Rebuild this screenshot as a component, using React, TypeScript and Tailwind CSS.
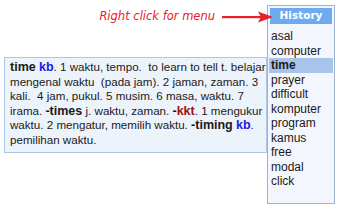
import React from "react";

const items = ["asal","computer","time","prayer","difficult","komputer","program","kamus","free","modal","click"];

export default function App() {
  return (
    <div className="w-[340px] h-[213px] bg-white flex items-start pt-[5px] pl-[4px]" style={{fontFamily: '"Liberation Sans", Arial, sans-serif'}}>
      <div className="w-[263px] flex flex-col">
        <div className="h-[24px] flex items-center justify-end">
          <span className="italic text-[11.5px] text-[#e8202a] mr-[7px]" style={{fontFamily: '"DejaVu Sans", Verdana, sans-serif'}}>Right click for menu</span>
          <svg width="51" height="12" viewBox="0 0 51 12" className="relative z-10 -mr-[6px]">
            <rect x="0" y="5" width="40" height="2.2" fill="#e8202a" />
            <polygon points="36,0.5 51,6 36,11.5 39,6" fill="#e8202a" />
          </svg>
        </div>
        <div className="mt-[28px] border border-[#aec6e6] bg-[#edf3fb] pl-[5px] pr-[2px] pt-[2px] pb-[5px] text-[11.6px] leading-[14.5px] text-[#1a1a1a] whitespace-pre overflow-hidden">
          <div><b className="text-[12.5px]">time</b> <b className="text-[#1a1ae0] text-[12.5px]">kb</b>. 1 waktu, tempo.  to learn to tell t. belajar</div>
          <div>mengenal waktu  (pada jam). 2 jaman, zaman. 3</div>
          <div>kali.  4 jam, pukul. 5 musim. 6 masa, waktu. 7</div>
          <div>irama. <b className="text-[12.5px]">-times</b> j. waktu, zaman. <b className="text-[12.5px]">-<span className="text-[#a01010]">kkt</span></b>. 1 mengukur</div>
          <div>waktu. 2 mengatur, memilih waktu. <b className="text-[12.5px]">-timing</b> <b className="text-[#1a1ae0] text-[12.5px]">kb</b>.</div>
          <div>pemilihan waktu.</div>
        </div>
      </div>
      <div className="w-[68px] h-[199px] border border-[#9cb3d6] bg-[#f3f7fd] p-[1px] flex flex-col">
        <div className="h-[16px] mt-[1px] mx-[1px] bg-[#6eaaf0] text-white font-bold text-[10.5px] flex items-center justify-center" style={{fontFamily: '"DejaVu Sans", Verdana, sans-serif'}}>History</div>
        <div className="mt-[5px] flex flex-col text-[12px] text-[#1a1a1a]">
          {items.map((it) => (
            <div key={it} className={"h-[14.5px] leading-[14.5px] pl-[2px] " + (it === "time" ? "bg-[#a9c4ea] font-bold" : "")}>{it}</div>
          ))}
        </div>
      </div>
    </div>
  );
}
